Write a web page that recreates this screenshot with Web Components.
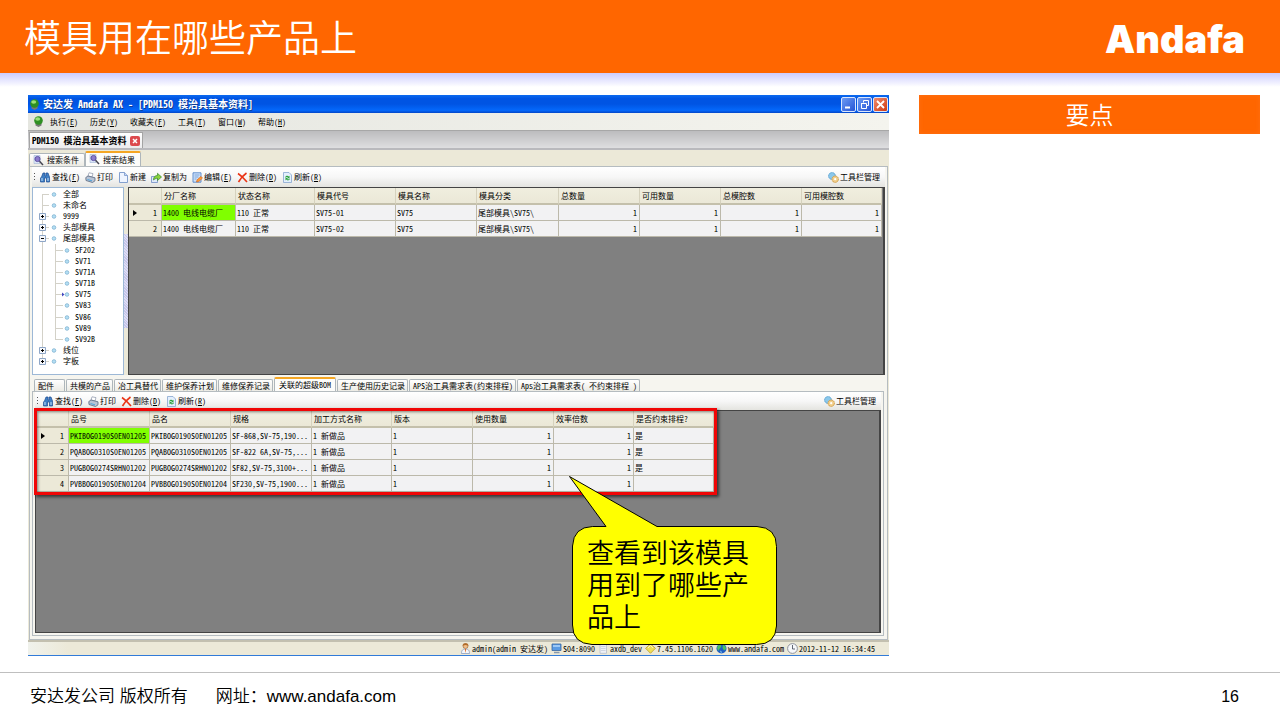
<!DOCTYPE html>
<html lang="zh-CN">
<head>
<meta charset="utf-8">
<title>模具用在哪些产品上</title>
<style>
html{height:100%}
body{margin:0;min-height:100%;display:flex;flex-direction:column;background:#fff;color:#000;font-family:"Liberation Sans","Noto Sans CJK SC",sans-serif}
main{flex:1;display:grid;grid-template-columns:861fr 341fr;gap:30px;padding:22px 20px 16px 28px;background:linear-gradient(#ccccff,#fff 14px)}
.figure{position:relative;display:flex;min-width:0}
</style>
</head>
<body>
<slide-header>模具用在哪些产品上</slide-header>
<main>
  <div class="figure">
    <app-window></app-window>
    <call-out>查看到该模具用到了哪些产品上</call-out>
  </div>
  <key-points>要点</key-points>
</main>
<slide-footer></slide-footer>
<script>
const define = (name, html, setup) => {
  const t = document.createElement('template');
  t.innerHTML = html;
  customElements.define(name, class extends HTMLElement {
    constructor() {
      super();
      this.attachShadow({mode: 'open'}).append(t.content.cloneNode(true));
    }
    connectedCallback() { if (setup && !this.ready) { this.ready = true; setup.call(this, this.shadowRoot); } }
  });
};

const ICONS = {
  find: '<path d="M1.5 5 3 1h2v3h1V1h2l1.500 4V10H6.500V6h-2v4H.5V6z" fill="#3f7fc4" stroke="#1c4c92" stroke-width=".7"/><path d="M2 6v3M8 6v3" stroke="#bfe0fa"/>',
  print: '<path d="M3 4 4 .8l4 .8L7 5z" fill="#fff" stroke="#8a94a8" stroke-width=".7"/><path d="M.8 5.500 3 4l7 1.800v3L7.500 10.500 1 8.500z" fill="#b8c3d4" stroke="#59677f" stroke-width=".8"/><path d="m2.500 7.500 4.500 1.300" stroke="#4fa4dc"/>',
  page: '<path d="M1.500.5h5l3 3v7h-8z" fill="#eef4ff" stroke="#7796c9" stroke-width=".9"/><path d="M6.500.5v3h3" fill="#c6d8f5" stroke="#7796c9" stroke-width=".8"/>',
  copy: '<path d="M.5 4.500h6v6h-6z" fill="#dfe9fb" stroke="#6e8cc4" stroke-width=".8"/><path d="M2.500 8c0-3 1.500-4.500 4-4.500V1.300l4 3.700-4 3.500V6.300C5 6.300 4 6.800 2.500 8z" fill="#8bd43c" stroke="#37862a" stroke-width=".7"/>',
  edit: '<path d="M1 .8h8v9.400H1z" fill="#cfe2fa" stroke="#5384c8" stroke-width=".9"/><path d="M2.500 3h5M2.500 5h4M2.500 7h2" stroke="#6897d2" stroke-width=".8"/><path d="m4.500 10 .6-2.200L9 4.500l1.500 1.600-3.800 3.500z" fill="#ff9b31" stroke="#d15b16" stroke-width=".6"/>',
  del: '<path d="M1 1.500c3 2 6 5 9 8.500M9.500 1C6 3.500 3.500 6.500 1.500 10" fill="none" stroke="#ea3415" stroke-width="1.600"/>',
  refresh: '<path d="M1.500.5h5.500l2.500 2.500v7.500h-8z" fill="#e4effd" stroke="#86a6cf" stroke-width=".8"/><path d="M3 5.300c.7-2 3-2 3.700-.8l.8-.7v2.400H5l.8-.8c-.8-.8-1.600-.4-1.800.4zM8 6.800c-.7 2-3 2-3.700.8l-.8.8V6h2.500l-.8.9c.6.8 1.500.500 1.800-.2z" fill="#2ba33b"/>',
  gear: '<circle cx="4" cy="4" r="3.400" fill="#8cc8ea" stroke="#5fa4d3" stroke-width="1" stroke-dasharray="1.600 .5"/><circle cx="7.200" cy="7.200" r="3.200" fill="#f2cf8c" stroke="#cf9d4c" stroke-width="1" stroke-dasharray="1.600 .5"/><circle cx="7.200" cy="7.200" r="1.100" fill="#fff"/>',
  search: '<path d="M1 .5h6v8H1z" fill="#dce7f8" stroke="#9db1d4" stroke-width=".6"/><circle cx="4.500" cy="4" r="2.600" fill="#8b7ccc" stroke="#574a9d" stroke-width=".9"/><path d="m6.500 6.200 3.500 3.800" stroke="#454552" stroke-width="1.500"/>',
  orb: '<path d="M2.500 7h6v2.500L5.500 11 2.500 9.500z" fill="#777"/><circle cx="5.500" cy="4.500" r="4.300" fill="#2e8f22"/><ellipse cx="4.700" cy="3" rx="2.500" ry="1.800" fill="#9be078"/>',
  user: '<circle cx="5.500" cy="3" r="2.500" fill="#f1bd85" stroke="#96602d" stroke-width=".6"/><path d="M2.500 2.800C2.500-.5 8.500-.5 8.500 2.800L5.500 2z" fill="#b26c29"/><path d="M1.500 10.500C1.500 7 3 6 5.500 6s4 1 4 4.500z" fill="#f4f7fc" stroke="#7e92b8" stroke-width=".7"/><path d="m4.800 6 .7 4 .7-4z" fill="#e66919"/>',
  pc: '<path d="M1 1h9v6.500H1z" fill="#5a9be4" stroke="#38669f" stroke-width=".8"/><path d="M2 2h7v2H2z" fill="#9cc9f6"/><path d="M3 9.500h5.500" stroke="#8798ad" stroke-width="1.500"/>',
  db: '<path d="M2 1.500h6.500v8.800H2z" fill="#eef1f7" stroke="#b5bdcc" stroke-width=".8"/><path d="M3 3.500h4.500M3 5.500h4.500M3 7.500h4.500" stroke="#c1c9d6" stroke-width=".7"/>',
  gem: '<path d="m5.500.8 4.900 4.500-4.900 5L.6 5.300z" fill="#f0df55" stroke="#b99d2c" stroke-width=".8"/><path d="M3 4.800 5.500 2.500 8 4.800" fill="none" stroke="#fffbd0"/>',
  globe: '<circle cx="5.500" cy="5.500" r="5" fill="#1f5ec4"/><path d="M2 2.500c2-2 4 0 3 1.500S3 6 2.500 8C.8 6 .9 4 2 2.500zM7 1.500c2.500 1 3 3 3 4.500L8 7.500 6.500 5z" fill="#4cc162"/><path d="M4 7.500 6 9l-1 1z" fill="#9fe0f2"/>',
  clock: '<circle cx="5.500" cy="5.500" r="4.900" fill="#f6f8fb" stroke="#8e929c" stroke-width="1"/><path d="M5.500 2v4h2.500" fill="none" stroke="#505664" stroke-width=".9"/>'
};

define('ui-icon', `<style>:host{display:block;flex:none;width:11px;height:11px}svg{display:block;width:100%;height:100%}</style><svg viewBox="0 0 11 11" aria-hidden="true"></svg>`,
  function (r) { r.querySelector('svg').innerHTML = ICONS[this.getAttribute('name')]; });

define('slide-header', `<style>
:host{display:flex;align-items:center;justify-content:space-between;height:73px;padding:0 35px 0 24px;background:#ff6600;color:#fff}
h1{margin:0;padding-bottom:2px;font:350 37px/48px "Noto Sans CJK SC",sans-serif}
b{font:900 38px/48px Inter,sans-serif;padding-top:4px}
</style><h1><slot></slot></h1><b>Andafa</b>`);

define('key-points', `<style>
:host{display:block;min-width:0}
h2{margin:0;height:39px;background:#ff6600;color:#fff;font:350 24px/38px "Noto Sans CJK SC",sans-serif;text-align:center;box-shadow:inset 0 0 5px #ff7114}
</style><h2><slot></slot></h2>`);

define('slide-footer', `<style>
:host{display:flex;align-items:center;height:47px;padding:0 41px 0 30px;border-top:1px solid #bfbfbf;font:17px/24px "Liberation Sans","Noto Sans CJK SC",sans-serif}
.site{margin-left:28px}
.cjk{font-weight:350}
a{color:inherit;text-decoration:none}
.no{margin-left:auto;font-size:16px}
</style><span class="cjk">安达发公司 版权所有</span><span class="site cjk">网址：<a href="http://www.andafa.com">www.andafa.com</a></span><span class="no">16</span>`);

define('call-out', `<style>
:host{position:absolute;left:541px;top:381px;width:208px;height:169px}
svg{position:absolute;inset:0}
p{position:absolute;left:18px;top:60px;width:170px;margin:0;font:350 27px/32px "Noto Sans CJK SC",sans-serif}
</style><svg width="208" height="169" viewBox="0 0 208 169" aria-hidden="true"><path d="M.5.5 88 50.500H188q19.500 1 19.500 20V150q-1 18.500-20 18.500H23Q3.500 167.500 3.500 149V70q1-19 20-19.500H37z" fill="#ff0" stroke="#000"/></svg><p><slot></slot></p>`);

define('title-bar', `<style>
:host{display:flex;align-items:center;gap:1px;height:18px;padding:0 1px;background:linear-gradient(#0b6af0,#0054e3 20%,#0054e3 50%,#0468fb 85%,#0346c8);color:#fff;font-weight:700;font-size:10px;text-shadow:1px 1px #123a8c}
.t{margin-left:2px;margin-right:auto;white-space:pre}
button{all:unset;box-sizing:border-box;width:15px;height:15px;border:1px solid #d9e6fd;border-radius:2px;background:linear-gradient(135deg,#6d9bf3,#2454d6)}
button.x{background:linear-gradient(135deg,#f08a6c,#cf3a13)}
svg{display:block}
</style><ui-icon name="orb"></ui-icon><span class="t">安达发 Andafa AX - [PDM150 模治具基本资料]</span>
<button aria-label="最小化"><svg width="13" height="13"><path d="M3 9.500h5" stroke="#fff" stroke-width="2"/></svg></button>
<button aria-label="还原"><svg width="13" height="13" fill="none" stroke="#fff"><path d="M5.500 4.500v-2h5v5h-2M3 5.500h5.500v5h-5v-5"/></svg></button>
<button class="x" aria-label="关闭"><svg width="13" height="13"><path d="m3 3 7 7m0-7-7 7" stroke="#fff" stroke-width="1.800"/></svg></button>`);

define('menu-bar', `<style>
:host{display:flex;align-items:center;height:17px;padding-left:5px;gap:6px;background:linear-gradient(90deg,#e5e6e0,#f4f4ee)}
nav{display:flex;gap:12px}
button{all:unset}
</style><ui-icon name="orb"></ui-icon><nav><button>执行(<u>E</u>)</button><button>历史(<u>Y</u>)</button><button>收藏夹(<u>F</u>)</button><button>工具(<u>T</u>)</button><button>窗口(<u>W</u>)</button><button>帮助(<u>H</u>)</button></nav>`);

define('document-tabs', `<style>
:host{display:flex;align-items:flex-end;height:20px;box-sizing:border-box;padding-left:1px;border-top:1px solid #a7a7a7;border-bottom:2px solid #b9b9bd;background:linear-gradient(#bcbcbe,#dedee0)}
div{display:flex;align-items:center;gap:3px;height:15px;padding:0 2px;border:1px solid #a4a4a4;border-bottom:0;background:linear-gradient(#fff,#ececee);font-weight:700;font-size:9px}
button{all:unset;width:10px;height:10px;border-radius:2px;background:#dc4a4e}
svg{display:block}
</style><div><span>PDM150 模治具基本资料</span><button aria-label="关闭页签"><svg width="10" height="10"><path d="m3 3 4 4m0-4L3 7" stroke="#fff" stroke-width="1.500"/></svg></button></div>`);

define('tab-item', `<style>
:host{display:block;min-width:var(--min,0)}
button{all:unset;box-sizing:border-box;display:flex;align-items:center;gap:3px;width:100%;height:12px;padding:0 2px 0 3px;border:1px solid #aeb6bb;border-bottom:0;border-radius:2px 2px 0 0;background:linear-gradient(#fff,#ecebe4);white-space:pre}
:host([active]) button{height:14px;padding:0 4px;border-top:2px solid #f5a623;background:#fcfcfa}
:host([wide]) button{padding:0 5px 0 3px;height:13px}
:host([wide][active]) button{height:15px}
</style><button role="tab"><slot></slot></button>`);

define('tool-button', `<style>
:host{display:block}
button{all:unset;display:flex;align-items:center;gap:1px;white-space:nowrap}
</style><button><span><slot></slot></span></button>`,
  function (r) {
    const icon = document.createElement('ui-icon');
    icon.setAttribute('name', this.getAttribute('icon'));
    r.querySelector('button').prepend(icon);
  });

define('tool-bar', `<style>
:host{display:flex;align-items:center;gap:5px;height:18px;padding:0 5px 0 2px;background:linear-gradient(#fff,#f7f7f7 50%,#e4e4e0)}
i{width:1px;height:9px;background:repeating-linear-gradient(#555 0 1px,transparent 1px 3px)}
.end{margin-left:auto}
</style><i></i><slot></slot><tool-button class="end" icon="gear">工具栏管理</tool-button>`);

define('tree-view', `<style>
:host{display:flex;box-sizing:border-box;width:92px;border:1px solid #9db8d6;background:#fff;padding:0 0 7px}
ul{flex:1;display:flex;flex-direction:column;list-style:none;margin:0;padding:0}
li{flex:1;display:flex;align-items:center;min-height:0;height:0}
svg{flex:none;overflow:visible}
</style><ul role="tree"></ul>`, function (r) {
  const rows = [['全部', 0], ['未命名', 0], ['9999', 0, '+'], ['头部模具', 0, '+'], ['尾部模具', 0, '-'], ['SF202', 1], ['SV71', 1], ['SV71A', 1], ['SV71B', 1], ['SV75', 1, '>'], ['SV83', 1], ['SV86', 1], ['SV89', 1], ['SV92B', 1], ['线位', 0, '+'], ['字板', 0, '+']];
  r.querySelector('ul').innerHTML = rows.map(([name, level, mark], i) => {
    const w = level ? 42 : 30, cx = level ? 34 : 21;
    let g = `<path d="M9.500 ${i ? 0 : 6}V${i === rows.length - 1 ? 6 : 12}M${level ? 22 : 9} 6.500h${level ? 8 : 7}${level ? `M22.500 0V${i === 13 ? 6 : 12}` : ''}" fill="none" stroke="#d3d1c8"/><circle cx="${cx}" cy="6.500" r="1.800" fill="#b5e0f4" stroke="#7fb1d1" stroke-width=".8"/>`;
    if (mark === '+' || mark === '-') g += `<path d="M6.500 3.500h6v6h-6z" fill="#f6f8fc" stroke="#8ea6c6"/><path d="M8 6.500h3${mark === '+' ? 'M9.500 5v3' : ''}" stroke="#000"/>`;
    if (mark === '>') g += '<path d="m29 4.500 2.500 2L29 8.500z" fill="#4348c0"/>';
    return `<li role="treeitem"><svg width="${w}" height="12" aria-hidden="true">${g}</svg><span>${name}</span></li>`;
  }).join('');
});

define('data-grid', `<style>
:host{display:block;flex:1;min-width:0;box-sizing:border-box;border:solid #444;border-width:1px 2px 1px 1px;background:#808080}
.wrap{position:relative;width:max-content}
:host([marked]) .wrap{margin-left:1px}
table{border-collapse:separate;border-spacing:0;table-layout:fixed}
th,td{box-sizing:border-box;height:16px;padding:0 2px 0 1px;border:solid #bcb9aa;border-width:0 1px 1px 0;background:#f2f2f3;font-weight:400;text-align:left;line-height:12px;white-space:pre;overflow:hidden}
thead th{height:17px;padding-left:2px;background:linear-gradient(#f0eedf,#ebe8d7);border-width:0 1px 2px 0;border-color:#d6d2be #d6d2be #c4c0ab}
tbody th{background:#ece9d8;text-align:right;padding-right:4px;position:relative}
td.n{text-align:right}
td.on{background:#80ff00}
tbody tr:first-child th::before{content:"";position:absolute;left:4px;top:5px;border:solid transparent;border-width:3px 0 3px 4px;border-left-color:#000}
.mark{display:none;position:absolute;inset:-3px;border:3px solid #f00606;box-shadow:2px 2px 3px #0009,inset 1px 1px 3px #0007;pointer-events:none}
:host([marked]) .mark{display:block}
</style><div class="wrap"><table></table><div class="mark"></div></div>`, function (r) {
  const d = GRIDS[this.getAttribute('source')];
  const total = d.widths.reduce((a, b) => a + b);
  const t = r.querySelector('table');
  t.style.width = total + 'px';
  t.innerHTML = `<colgroup>${d.widths.map(w => `<col style="width:${w}px">`).join('')}</colgroup><thead><tr><th></th>${d.head.map(h => `<th scope="col">${h}</th>`).join('')}</tr></thead><tbody>${d.rows.map((row, i) => `<tr><th scope="row">${i + 1}</th>${row.map((c, j) => `<td class="${d.numeric.includes(j) ? 'n' : ''}${!i && !j ? ' on' : ''}">${c}</td>`).join('')}</tr>`).join('')}</tbody>`;
});

define('status-bar', `<style>
:host{display:flex;align-items:center;justify-content:flex-end;height:13px;padding-right:14px;border-top:2px solid #c3c0b0;border-bottom:1px solid #317bd8;background:linear-gradient(90deg,#f0f2ec,#ece9d8 40px)}
span{display:flex;align-items:center;gap:1px;margin-left:3px;white-space:pre}
</style><span><ui-icon name="user"></ui-icon>admin(admin 安达发)</span><span><ui-icon name="pc"></ui-icon>S04:8090</span><span><ui-icon name="db"></ui-icon>axdb_dev</span><span><ui-icon name="gem"></ui-icon>7.45.1106.1620</span><span><ui-icon name="globe"></ui-icon>www.andafa.com</span><span><ui-icon name="clock"></ui-icon>2012-11-12 16:34:45</span>`);

const GRIDS = {
  moulds: {
    widths: [33, 74, 79, 81, 81, 82, 81, 81, 81, 80], numeric: [5, 6, 7, 8],
    head: ['分厂名称', '状态名称', '模具代号', '模具名称', '模具分类', '总数量', '可用数量', '总模腔数', '可用模腔数'],
    rows: [['1400 电线电缆厂', '110 正常', 'SV75-01', 'SV75', '尾部模具\\SV75\\', 1, 1, 1, 1], ['1400 电线电缆厂', '110 正常', 'SV75-02', 'SV75', '尾部模具\\SV75\\', 1, 1, 1, 1]]
  },
  products: {
    widths: [32, 81, 81, 81, 80, 81, 81, 80, 80], numeric: [5, 6],
    head: ['品号', '品名', '规格', '加工方式名称', '版本', '使用数量', '效率倍数', '是否约束排程?'],
    rows: [
      ['PKIBOG0190S0EN01205', 'PKIBOG0190S0EN01205', 'SF-868,SV-75,190...', '1 新做品', '1', 1, 1, '是'],
      ['PQABOG0310S0EN01205', 'PQABOG0310S0EN01205', 'SF-822 6A,SV-75,...', '1 新做品', '1', 1, 1, '是'],
      ['PUGBOG0274SRHN01202', 'PUGBOG0274SRHN01202', 'SF82,SV-75,3100+...', '1 新做品', '1', 1, 1, '是'],
      ['PVBBOG0190S0EN01204', 'PVBBOG0190S0EN01204', 'SF230,SV-75,1900...', '1 新做品', '1', 1, 1, '']]
  }
};

define('app-window', `<style>
:host{flex:1;min-width:0;display:flex;flex-direction:column;font:8px/12px "Noto Sans CJK SC",sans-serif;font-feature-settings:"hwid";background:#ece9d8}
.tabs{display:flex;align-items:flex-end}
.page{height:16px;padding-left:1px}
.panel{flex:1;display:flex;flex-direction:column;margin:0 1px;padding:0 2px 3px;border:1px solid #b5bcc0;background:#f6f5ef}
.panel>tool-bar{height:20px}
.split{display:flex;height:188px}
.sash{display:flex;align-items:center;width:4px;background:#ece9d8}
.sash::before{content:"";width:4px;height:94px;background:repeating-linear-gradient(45deg,#c5c5ea 0 1px,#dedef6 1px 2px)}
.detail{height:16px;padding-left:2px;gap:1px}
.lower{flex:1;display:flex;flex-direction:column;margin-right:1px;padding:0 2px 2px;border:1px solid #b5bcc0}
</style>
<title-bar></title-bar><menu-bar></menu-bar><document-tabs></document-tabs>
<div class="tabs page" role="tablist"><tab-item wide><ui-icon name="search"></ui-icon>搜索条件</tab-item><tab-item wide active><ui-icon name="search"></ui-icon>搜索结果</tab-item></div>
<div class="panel">
  <tool-bar><tool-button icon="find">查找(<u>F</u>)</tool-button><tool-button icon="print">打印</tool-button><tool-button icon="page">新建</tool-button><tool-button icon="copy">复制为</tool-button><tool-button icon="edit">编辑(<u>E</u>)</tool-button><tool-button icon="del">删除(<u>D</u>)</tool-button><tool-button icon="refresh">刷新(<u>R</u>)</tool-button></tool-bar>
  <div class="split"><tree-view></tree-view><div class="sash"></div><data-grid source="moulds"></data-grid></div>
  <div class="tabs detail" role="tablist"><tab-item style="--min:31px">配件</tab-item><tab-item>共模的产品</tab-item><tab-item>冶工具替代</tab-item><tab-item>维护保养计划</tab-item><tab-item>维修保养记录</tab-item><tab-item active>关联的超级BOM</tab-item><tab-item>生产使用历史记录</tab-item><tab-item>APS治工具需求表(约束排程)</tab-item><tab-item>Aps治工具需求表( 不约束排程 )</tab-item></div>
  <div class="lower">
    <tool-bar><tool-button icon="find">查找(<u>F</u>)</tool-button><tool-button icon="print">打印</tool-button><tool-button icon="del">删除(<u>D</u>)</tool-button><tool-button icon="refresh">刷新(<u>R</u>)</tool-button></tool-bar>
    <data-grid source="products" marked></data-grid>
  </div>
</div>
<status-bar></status-bar>`);
</script>
</body>
</html>
